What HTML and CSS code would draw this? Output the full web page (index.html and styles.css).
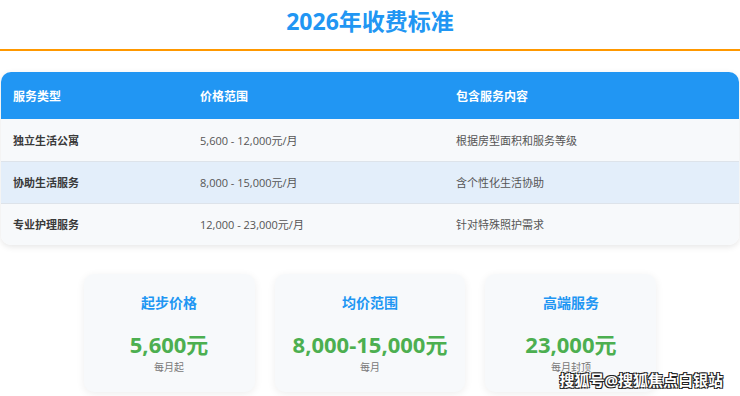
FILE: index.html
```html
<!DOCTYPE html>
<html lang="zh">
<head>
    <title>2026年收费标准</title>
    <meta charset="UTF-8">
    <meta name="viewport" content="width=device-width, initial-scale=1.0">
    <link rel="stylesheet" href="styles.css">
</head>
<body>
    <div class="page">
        <div class="header">
            <h1>2026年收费标准</h1>
        </div>

        <div class="table-wrap">
            <table class="price-table">
                <thead>
                    <tr>
                        <th class="col-type">服务类型</th>
                        <th class="col-price">价格范围</th>
                        <th>包含服务内容</th>
                    </tr>
                </thead>
                <tbody>
                    <tr>
                        <td class="name">独立生活公寓</td>
                        <td>5,600 - 12,000元/月</td>
                        <td>根据房型面积和服务等级</td>
                    </tr>
                    <tr class="highlight">
                        <td class="name">协助生活服务</td>
                        <td>8,000 - 15,000元/月</td>
                        <td>含个性化生活协助</td>
                    </tr>
                    <tr>
                        <td class="name">专业护理服务</td>
                        <td>12,000 - 23,000元/月</td>
                        <td>针对特殊照护需求</td>
                    </tr>
                </tbody>
            </table>
        </div>

        <div class="cards">
            <div class="card">
                <div class="card-title">起步价格</div>
                <div class="card-value">5,600元</div>
                <div class="card-note">每月起</div>
            </div>
            <div class="card">
                <div class="card-title">均价范围</div>
                <div class="card-value">8,000-15,000元</div>
                <div class="card-note">每月</div>
            </div>
            <div class="card">
                <div class="card-title">高端服务</div>
                <div class="card-value">23,000元</div>
                <div class="card-note">每月封顶</div>
            </div>
        </div>
    </div>

    <div class="watermark">搜狐号@搜狐焦点白银站</div>
</body>
</html>
```

FILE: styles.css
```css
:root {
    --blue: #2196F3;
    --orange: #FF9800;
    --green: #4CAF50;
    --row-bg: #F7F9FB;
    --row-alt: #E3EEFA;
}

* {
    margin: 0;
    padding: 0;
    box-sizing: border-box;
}

body {
    font-family: "Open Sans", "Noto Sans CJK SC", sans-serif;
    background-color: #fff;
    color: #333;
    position: relative;
    height: 396px;
    overflow: hidden;
}

.page {
    padding: 0 1px;
}

.header {
    text-align: center;
    padding-top: 6px;
    padding-bottom: 13px;
    border-bottom: 2px solid var(--orange);
    margin: 0 -1px;
}

.header h1 {
    font-size: 23px;
    line-height: 30px;
    font-weight: 700;
    color: var(--blue);
}

.table-wrap {
    margin-top: 21px;
    border-radius: 10px;
    overflow: hidden;
    box-shadow: 0 2px 6px rgba(0, 0, 0, 0.1);
}

.price-table {
    width: 100%;
    border-collapse: collapse;
}

.price-table th {
    background-color: var(--blue);
    color: #fff;
    font-size: 12px;
    font-weight: 700;
    text-align: left;
    height: 47px;
    padding: 0 12px;
}

.col-type {
    width: 187px;
}

.col-price {
    width: 256px;
}

.price-table td {
    background-color: var(--row-bg);
    font-size: 11px;
    color: #555;
    height: 42px;
    padding: 0 12px;
    border-top: 1px solid #DDE3EA;
}

.price-table tr:first-child td {
    border-top: none;
}

.price-table tr.highlight td {
    background-color: var(--row-alt);
}

.price-table td.name {
    font-weight: 700;
    color: #3a3a3a;
}

.cards {
    display: flex;
    justify-content: center;
    gap: 20px;
    margin-top: 29px;
}

.card {
    min-width: 171px;
    padding: 20px 18px 18px;
    background-color: var(--row-bg);
    border-radius: 10px;
    box-shadow: 0 2px 8px rgba(0, 0, 0, 0.07);
    text-align: center;
}

.card-title {
    font-size: 14px;
    line-height: 18px;
    font-weight: 700;
    color: var(--blue);
}

.card-value {
    margin-top: 17px;
    font-size: 22px;
    line-height: 30px;
    font-weight: 700;
    color: var(--green);
}

.card-note {
    margin-top: 1px;
    font-size: 10px;
    line-height: 14px;
    color: #777;
}

.watermark {
    position: absolute;
    right: 17px;
    top: 370px;
    font-size: 15px;
    line-height: 20px;
    font-weight: 700;
    color: #fff;
    text-shadow: 1px 1px 0 #222, -1px -1px 0 #222, 1px -1px 0 #222, -1px 1px 0 #222;
}
```
